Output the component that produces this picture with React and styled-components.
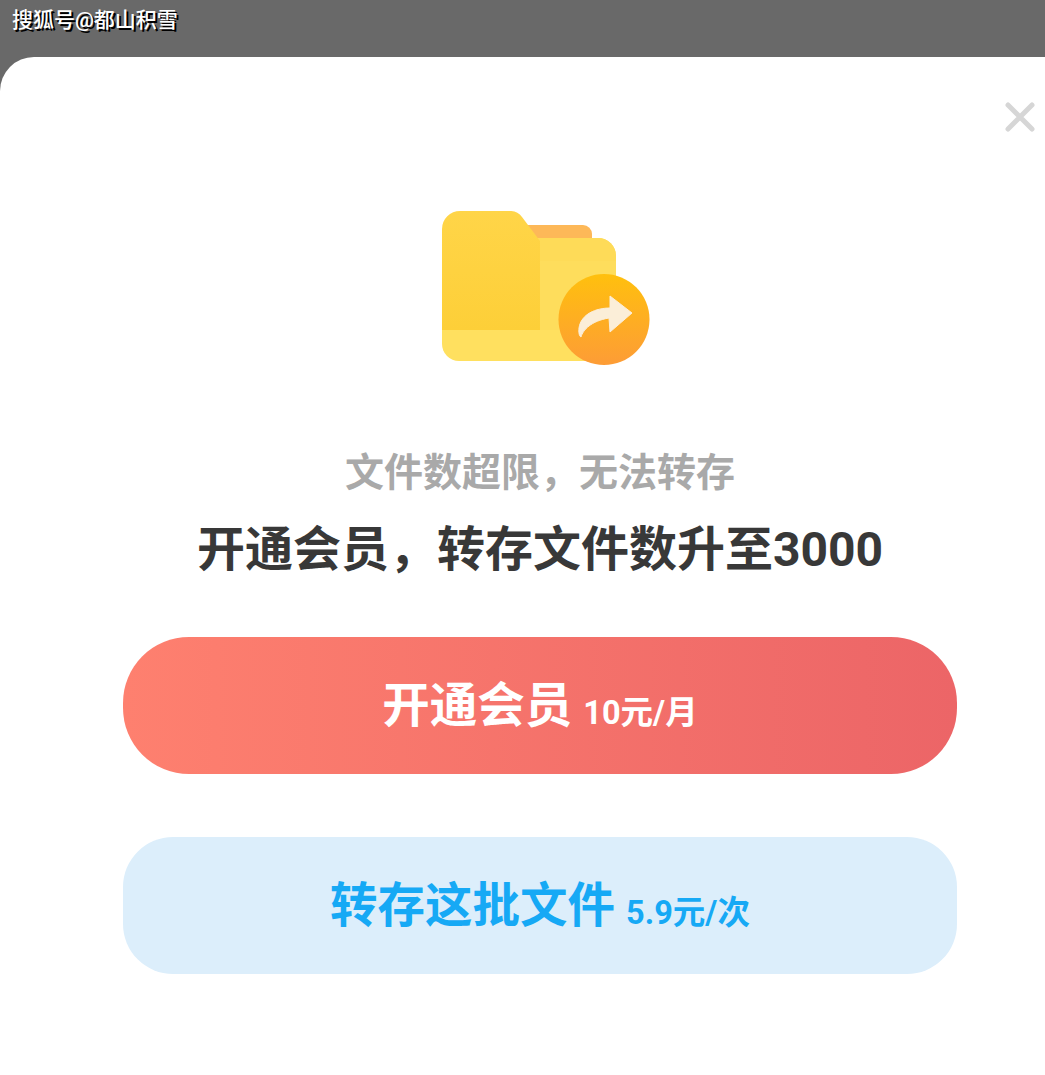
import React from 'react';
import styled, { createGlobalStyle } from 'styled-components';

const CJK = `Roboto, "Noto Sans CJK SC", sans-serif`;

const GlobalStyle = createGlobalStyle`
  html, body {
    margin: 0;
    padding: 0;
    background: #fff;
  }
`;

const Page = styled.div`
  width: 1045px;
  height: 1075px;
  overflow: hidden;
  background: #696969;
  font-family: ${CJK};
`;

const Watermark = styled.div`
  height: 57px;
  box-sizing: border-box;
  padding: 8px 0 0 12px;
  color: #fff;
  font-size: 21px;
  line-height: 24px;
  font-weight: 500;
  text-shadow: 2px 2px 0 #000;
`;

const Sheet = styled.div`
  position: relative;
  height: 1018px;
  box-sizing: border-box;
  padding: 154px 88px 0 123px;
  background: #fff;
  border-top-left-radius: 34px;
`;

const CloseButton = styled.button`
  position: absolute;
  top: 42px;
  right: 7px;
  width: 36px;
  height: 36px;
  padding: 0;
  border: 0;
  background: none;
`;

const Column = styled.div`
  display: flex;
  flex-direction: column;
  align-items: center;
`;

const Illustration = styled.svg`
  display: block;
  width: 210px;
  height: 155px;
  margin-left: 13px;
`;

const Hint = styled.div`
  margin-top: 79px;
  color: #a9a9a9;
  font-size: 39px;
  line-height: 56px;
  font-weight: 700;
`;

const Headline = styled.div`
  margin-top: 21px;
  color: #383838;
  font-size: 48px;
  line-height: 56px;
  font-weight: 700;
  white-space: nowrap;
`;

const ActionButton = styled.button`
  display: flex;
  align-items: center;
  justify-content: center;
  gap: 11px;
  width: 834px;
  height: 137px;
  margin-top: ${(p) => p.$top}px;
  padding: 0;
  box-sizing: border-box;
  border: 0;
  border-radius: ${(p) => p.$radius}px;
  font-family: ${CJK};
  font-weight: 700;
  color: ${(p) => p.$color};
  background: ${(p) => p.$background};
`;

const ButtonLabel = styled.span`
  font-size: 47.5px;
  line-height: 56px;
`;

const ButtonPrice = styled.span`
  margin-top: 14px;
  font-size: 32.5px;
  line-height: 40px;
`;

const FolderIcon = () => (
  <Illustration viewBox="0 0 210 155">
    <defs>
      <linearGradient id="badge" x1="0" y1="0" x2="0" y2="1">
        <stop offset="0" stopColor="#ffc00e" />
        <stop offset="1" stopColor="#fd9c36" />
      </linearGradient>
      <linearGradient id="front" x1="0" y1="0" x2="0" y2="1">
        <stop offset="0" stopColor="#ffd548" />
        <stop offset="1" stopColor="#fdcf38" />
      </linearGradient>
    </defs>
    <path d="M70 14h71a9 9 0 0 1 9 9v10H70z" fill="#fdb858" />
    <path d="M90 27h66a18 18 0 0 1 18 18v90H90z" fill="#fedd5c" />
    <path d="M90 27h66a18 18 0 0 1 18 18v5H90z" fill="#fedb58" />
    <path
      d="M0 18A18 18 0 0 1 18 0h50a14 14 0 0 1 12 6l18 24v89H0z"
      fill="url(#front)"
    />
    <path d="M0 119h150v31H17A17 17 0 0 1 0 133z" fill="#ffe05f" />
    <circle cx="162" cy="108.5" r="45.5" fill="url(#badge)" />
    <path
      d="M190 102L168 85v12c-14 0-29 6-31 20-.5 4 0 8 2 9 2-7 10-16 28-19l1 14z"
      fill="#fbeed8"
      stroke="#fbeed8"
      strokeWidth="1"
      strokeLinejoin="round"
    />
  </Illustration>
);

const CloseIcon = () => (
  <svg width="36" height="36" viewBox="0 0 36 36">
    <path
      d="M6 6l24 24M30 6L6 30"
      stroke="#d6d6d6"
      strokeWidth="5"
      strokeLinecap="round"
    />
  </svg>
);

const App = () => (
  <Page>
    <GlobalStyle />
    <Watermark>搜狐号@都山积雪</Watermark>
    <Sheet>
      <CloseButton>
        <CloseIcon />
      </CloseButton>
      <Column>
        <FolderIcon />
        <Hint>文件数超限，无法转存</Hint>
        <Headline>开通会员，转存文件数升至3000</Headline>
        <ActionButton
          $top={59}
          $radius={66}
          $color="#fff"
          $background="linear-gradient(90deg, #fe806f 0%, #ec6567 100%)"
        >
          <ButtonLabel>开通会员</ButtonLabel>
          <ButtonPrice>10元/月</ButtonPrice>
        </ActionButton>
        <ActionButton
          $top={63}
          $radius={50}
          $color="#16a9f5"
          $background="#dceefb"
        >
          <ButtonLabel>转存这批文件</ButtonLabel>
          <ButtonPrice>5.9元/次</ButtonPrice>
        </ActionButton>
      </Column>
    </Sheet>
  </Page>
);

export default App;
